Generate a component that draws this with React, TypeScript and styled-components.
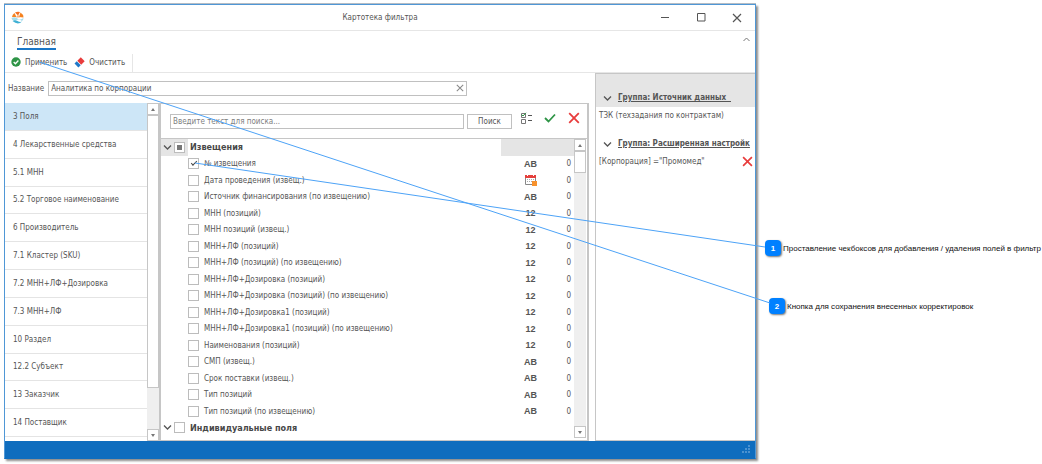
import React, { useEffect, useRef } from 'react';
import styled, { createGlobalStyle, css } from 'styled-components';

const GlobalStyle = createGlobalStyle`
  *, *::before, *::after { box-sizing: border-box; }
  body { margin: 0; background: #fff; }
  body, button, input, table {
    font-family: "DejaVu Sans Condensed", "DejaVu Sans", sans-serif;
    font-size: 8px;
    color: #555;
  }
  button { padding: 0; border: 0; background: none; }
  svg { flex: none; }
`;

const Page = styled.div`
  position: relative;
  display: flex;
  min-height: 100vh;
  padding: 4px 0 5px 4px;
`;

const Window = styled.main`
  flex: 1;
  min-width: 0;
  display: flex;
  flex-direction: column;
  border: 1px solid #4f97d6;
  border-bottom-color: #0f6dbe;
  background: #fff;
  box-shadow: 0 -1px 0 #b4bcc4, 2px 2px 2px #8c8c8c;
`;

const TitleBar = styled.header`
  display: grid;
  grid-template-columns: 108px 1fr 108px;
  align-items: center;
  height: 26px;
  border-bottom: 1px solid #e6e6e6;
`;

const LogoBox = styled.span`
  display: flex;
  padding-left: 6px;
`;

const Title = styled.h1`
  margin: 0;
  text-align: center;
  font-size: 8px;
  font-weight: 400;
`;

const WindowControls = styled.div`
  display: grid;
  grid-template-columns: repeat(3, 1fr);
  height: 100%;
`;

const IconButton = styled.button`
  display: flex;
  align-items: center;
  justify-content: center;
`;

const Ribbon = styled.section`
  height: 42px;
  border-bottom: 1px solid #e6e6e6;
`;

const TabRow = styled.div`
  display: flex;
  align-items: flex-start;
  justify-content: space-between;
  height: 23px;
  padding: 4px 4px 0 12px;
`;

const RibbonTab = styled.button`
  height: 15px;
  border-bottom: 2px solid #1a76c6;
  font-size: 10px;
  line-height: 12px;
`;

const ToolRow = styled.div`
  display: inline-flex;
  align-items: center;
  gap: 7px;
  height: 18px;
  padding: 0 7px 2px 6px;
  border-right: 1px solid #e6e6e6;
`;

const ToolButton = styled.button`
  display: flex;
  align-items: center;
  gap: 4px;
`;

const Workspace = styled.div`
  flex: 1;
  display: grid;
  grid-template-columns: minmax(0, 1fr) 160px;
  column-gap: 6px;
`;

const Editor = styled.div`
  display: flex;
  flex-direction: column;
`;

const NameRow = styled.div`
  display: flex;
  align-items: center;
  gap: 4px;
  height: 30px;
  padding: 0 122px 0 3px;
`;

const InputFrame = styled.div`
  flex: 1;
  display: flex;
  align-items: center;
  height: 15px;
  padding-right: 2px;
  border: 1px solid #c0c0c0;
`;

const TextInput = styled.input`
  flex: 1;
  min-width: 0;
  height: 100%;
  padding: 0 2px;
  border: 0;
  outline: 0;
  background: transparent;
  &::placeholder { color: #808080; opacity: 1; }
`;

const Columns = styled.div`
  flex: 1;
  display: grid;
  grid-template-columns: 154px minmax(0, 1fr);
`;

const Sidebar = styled.nav`
  display: grid;
  grid-template-columns: 1fr 12px;
`;

const SectionList = styled.ul`
  display: grid;
  grid-auto-rows: 1fr;
  margin: 0;
  padding: 0 0 4px;
  list-style: none;
`;

const SectionItem = styled.li<{ $selected?: boolean }>`
  display: flex;
  min-height: 24px;
  border-bottom: 1px solid #e4e4e4;
  background: ${p => (p.$selected ? '#cde6f7' : '#fff')};
`;

const SectionLink = styled.a`
  flex: 1;
  display: flex;
  align-items: center;
  padding-left: 8px;
  color: inherit;
  text-decoration: none;
`;

const Scrollbar = styled.div`
  display: flex;
  flex-direction: column;
  background: #efefef;
`;

const ScrollArrow = styled.button<{ $down?: boolean }>`
  display: flex;
  align-items: center;
  justify-content: center;
  height: 12px;
  border: 1px solid #c6c6c6;
  background: #fff;
  &::before {
    content: "";
    border: 2px solid transparent;
    ${p => (p.$down
      ? css`border-top: 3px solid #777; border-bottom: 0;`
      : css`border-bottom: 3px solid #777; border-top: 0;`)}
  }
`;

const ScrollTrack = styled.div<{ $thumb: number }>`
  flex: 1;
  display: grid;
  grid-template-rows: ${p => p.$thumb}fr ${p => 100 - p.$thumb}fr;
  &::before {
    content: "";
    border: 1px solid #c6c6c6;
    background: #fff;
  }
`;

const FieldsPanel = styled.section`
  display: flex;
  flex-direction: column;
  border: 1px solid #c6c6c6;
  border-width: 1px 2px;
`;

const SearchRow = styled.div`
  display: flex;
  align-items: center;
  gap: 3px;
  height: 35px;
  padding: 0 7px 0 9px;
  border-bottom: 1px solid #c6c6c6;
`;

const SearchButton = styled.button`
  width: 45px;
  height: 15px;
  border: 1px solid #c0c0c0;
`;

const SearchTools = styled.div`
  display: flex;
  align-items: center;
  gap: 12px;
  padding: 0 0 6px 5px;
`;

const TreeArea = styled.div`
  flex: 1;
  display: grid;
  grid-template-columns: minmax(0, 1fr) 12px;
  padding: 0 1px 2px 0;
`;

const FieldTable = styled.table`
  display: block;
  padding-bottom: 2px;
`;

const FieldBody = styled.tbody`
  display: grid;
  grid-auto-rows: minmax(14px, 1fr);
  height: 100%;
`;

const FieldRow = styled.tr`
  display: grid;
  grid-template-columns: 27px minmax(0, 1fr) 59px 14px;
`;

const Cell = styled.td<{ $shaded?: boolean }>`
  display: flex;
  align-items: center;
  gap: 2px;
  padding: 0;
  background: ${p => (p.$shaded ? '#e5e5e5' : 'transparent')};
`;

const ToggleCell = styled(Cell)`
  padding-left: 2px;
`;

const TypeCell = styled(Cell)`
  justify-content: center;
  font: bold 9px "Liberation Sans", sans-serif;
`;

const CountCell = styled(Cell)`
  justify-content: flex-end;
  padding-right: 3px;
`;

const FieldLabel = styled.label`
  display: flex;
  align-items: center;
  gap: 5px;
  white-space: nowrap;
`;

const GroupLabel = styled.label`
  padding-left: 2px;
  font-size: 9px;
  font-weight: 700;
  color: #484848;
  white-space: nowrap;
`;

const Check = styled.input`
  appearance: none;
  display: flex;
  align-items: center;
  justify-content: center;
  flex: none;
  width: 11px;
  height: 11px;
  margin: 0;
  border: 1px solid #bcbcbc;
  background: #fff;
  &:checked::before {
    content: "";
    width: 6px;
    height: 3px;
    border: solid #444;
    border-width: 0 0 1px 1px;
    transform: translateY(-1px) rotate(-45deg);
  }
  &:indeterminate::before {
    content: "";
    width: 5px;
    height: 5px;
    background: #777;
  }
`;

const FilterPanel = styled.aside`
  min-width: 0;
  border: 1px solid #c6c6c6;
  border-right: 0;
`;

const FilterHeading = styled.h2<{ $active?: boolean }>`
  display: flex;
  align-items: flex-end;
  height: ${p => (p.$active ? 33 : 30)}px;
  margin: 0;
  padding: 0 2px 3px 7px;
  background: ${p => (p.$active ? '#e5e5e5' : 'transparent')};
  font-size: 8px;
  line-height: 12px;
`;

const HeadingToggle = styled(IconButton)`
  width: 15px;
  height: 12px;
  justify-content: flex-start;
`;

const HeadingText = styled.span`
  min-width: 0;
  overflow: hidden;
  white-space: pre;
  text-decoration: underline;
`;

const FilterLine = styled.div`
  display: flex;
  align-items: center;
  justify-content: space-between;
  height: 16px;
  padding: 0 2px 0 3px;
  white-space: nowrap;
`;

const StatusBar = styled.footer`
  display: flex;
  align-items: flex-end;
  justify-content: flex-end;
  height: 17px;
  padding: 4px;
  background: #0f6dbe;
`;

const Notes = styled.aside`
  flex: none;
  display: flex;
  flex-direction: column;
  gap: 42px;
  width: 286px;
  padding: 236px 0 0 9px;
`;

const Note = styled.div<{ $indent?: boolean }>`
  display: flex;
  align-items: center;
  gap: 2px;
  padding-left: ${p => (p.$indent ? 4 : 0)}px;
  font: 8px "Liberation Sans", sans-serif;
  color: #111;
  white-space: nowrap;
`;

const Badge = styled.span`
  display: flex;
  align-items: center;
  justify-content: center;
  flex: none;
  width: 16px;
  height: 16px;
  border-radius: 4px;
  background: #0080ff;
  box-shadow: 1px 1px 2px #777;
  font-weight: 700;
  color: #fff;
`;

const Leaders = styled.svg`
  position: absolute;
  inset: 0;
  width: 100%;
  height: 100%;
  pointer-events: none;
`;

const Logo = () => (
  <svg width="13" height="13" viewBox="0 0 26 26">
    <path d="M2 12A11 11 0 0 1 7 4L11 12Z" fill="#f58220" />
    <path d="M8 3A12 12 0 0 1 18 2L14 9Z" fill="#f36f21" />
    <path d="M19 3A12 12 0 0 1 25 13L16 12Z" fill="#f58220" />
    <path d="M10 13L14 7L18 13Z" fill="#f9b27c" />
    <path d="M1 14Q7 11 13 15T25 14Q25 18 22 20Q17 15 11 18T2 17Z" fill="#a6dcec" />
    <path d="M3 20Q8 17 13 20T22 21Q14 29 3 20Z" fill="#3fb0d4" />
  </svg>
);

const Chevron = ({ up }: { up?: boolean }) => (
  <svg width="9" height="9" viewBox="0 0 9 9" fill="none" stroke={up ? '#777' : '#555'} strokeWidth={up ? 1 : 1.3}>
    <path d={up ? 'M1.500 6l3-3 3 3' : 'M1 2.500l3.500 3.500 3.500-3.500'} />
  </svg>
);

const Cross = ({ size, color, width = 1 }: { size: number; color: string; width?: number }) => (
  <svg width={size} height={size} viewBox="0 0 10 10" stroke={color} strokeWidth={width}>
    <path d="M1 1L9 9M9 1L1 9" />
  </svg>
);

const ApplyIcon = () => (
  <svg width="10" height="10" viewBox="0 0 10 10">
    <circle cx="5" cy="5" r="4.700" fill="#2e9446" />
    <path d="M2.700 5l1.700 1.700 3-3.200" fill="none" stroke="#fff" strokeWidth="1.300" />
  </svg>
);

const EraserIcon = () => (
  <svg width="11" height="11" viewBox="0 0 11 11">
    <path d="M6.800 .3L10.700 4.200L7.200 7.700L3.300 3.800Z" fill="#e83c3c" />
    <path d="M2.800 4.300L6.700 8.200L4.400 10.500L.5 6.600Z" fill="#1f78c8" />
  </svg>
);

const CheckListIcon = () => (
  <svg width="12" height="12" viewBox="0 0 12 12" fill="none" stroke="#777">
    <path d="M1.500 1.500h4v4h-4zM1.500 7.500h4v4h-4z" />
    <path d="M8 3.500h4M8 8.500h4" stroke="#555" />
    <path d="M1.500 2.500l1.500 1.500L6 .8" stroke="#2e9446" />
  </svg>
);

const CalendarIcon = () => (
  <svg width="12" height="12" viewBox="0 0 12 12">
    <path d="M.5 3V10.500H10.500V3" fill="#fff" stroke="#888" />
    <path d="M0 1H11V4H0Z" fill="#e5403c" />
    <path d="M2.500 0V2M8.500 0V2" stroke="#fff" />
    <path d="M2 5.500H9M2 7.500H7" stroke="#aaa" strokeDasharray="1 1" />
    <path d="M7 7H12V12H7Z" fill="#f7922d" />
  </svg>
);

const GripIcon = () => (
  <svg width="9" height="9" viewBox="0 0 9 9" fill="#4c92d0">
    <path d="M6 0h2v2H6zM6 3h2v2H6zM6 6h2v2H6zM3 3h2v2H3zM3 6h2v2H3zM0 6h2v2H0z" />
  </svg>
);

const sections = [
  '3 Поля', '4 Лекарственные средства', '5.1 МНН', '5.2 Торговое наименование',
  '6 Производитель', '7.1 Кластер (SKU)', '7.2 МНН+ЛФ+Дозировка', '7.3 МНН+ЛФ',
  '10 Раздел', '12.2 Субъект', '13 Заказчик', '14 Поставщик',
];

type FieldType = 'AB' | '12' | 'date';

const fields: [string, FieldType][] = [
  ['№ извещения', 'AB'],
  ['Дата проведения (извещ.)', 'date'],
  ['Источник финансирования (по извещению)', 'AB'],
  ['МНН (позиций)', '12'],
  ['МНН позиций (извещ.)', '12'],
  ['МНН+ЛФ (позиций)', '12'],
  ['МНН+ЛФ (позиций) (по извещению)', '12'],
  ['МНН+ЛФ+Дозировка (позиций)', '12'],
  ['МНН+ЛФ+Дозировка (позиций) (по извещению)', '12'],
  ['МНН+ЛФ+Дозировка1 (позиций)', '12'],
  ['МНН+ЛФ+Дозировка1 (позиций) (по извещению)', '12'],
  ['Наименования (позиций)', '12'],
  ['СМП (извещ.)', 'AB'],
  ['Срок поставки (извещ.)', 'AB'],
  ['Тип позиций', 'AB'],
  ['Тип позиций (по извещению)', 'AB'],
];

function GroupRow({ id, name, mixed }: { id: string; name: string; mixed?: boolean }) {
  const box = useRef<HTMLInputElement>(null);
  useEffect(() => {
    if (box.current) box.current.indeterminate = !!mixed;
  }, [mixed]);
  return (
    <FieldRow>
      <ToggleCell $shaded={mixed}>
        <IconButton aria-label={`Свернуть: ${name}`}><Chevron /></IconButton>
        <Check ref={box} id={id} type="checkbox" />
      </ToggleCell>
      <Cell><GroupLabel htmlFor={id}>{name}</GroupLabel></Cell>
      <TypeCell $shaded={mixed} />
      <CountCell $shaded={mixed} />
    </FieldRow>
  );
}

function ScrollControl({ thumb }: { thumb: number }) {
  return (
    <Scrollbar>
      <ScrollArrow aria-label="Вверх" />
      <ScrollTrack $thumb={thumb} />
      <ScrollArrow $down aria-label="Вниз" />
    </Scrollbar>
  );
}

function FilterGroup({ title, active }: { title: string; active?: boolean }) {
  return (
    <FilterHeading $active={active}>
      <HeadingToggle aria-label="Свернуть группу"><Chevron /></HeadingToggle>
      <HeadingText>{title}</HeadingText>
    </FilterHeading>
  );
}

export default function App() {
  return (
    <>
      <GlobalStyle />
      <Page>
        <Window>
          <TitleBar>
            <LogoBox><Logo /></LogoBox>
            <Title>Картотека фильтра</Title>
            <WindowControls>
              <IconButton aria-label="Свернуть">
                <svg width="9" height="9" stroke="#555"><path d="M0 4.500h8" /></svg>
              </IconButton>
              <IconButton aria-label="Развернуть">
                <svg width="9" height="9" stroke="#555" fill="none"><path d="M.5 .5h7.500v7.500h-7.500z" /></svg>
              </IconButton>
              <IconButton aria-label="Закрыть"><Cross size={10} color="#555" width={1.2} /></IconButton>
            </WindowControls>
          </TitleBar>

          <Ribbon>
            <TabRow>
              <RibbonTab>Главная</RibbonTab>
              <IconButton aria-label="Свернуть ленту"><Chevron up /></IconButton>
            </TabRow>
            <ToolRow>
              <ToolButton><ApplyIcon />Применить</ToolButton>
              <ToolButton><EraserIcon />Очистить</ToolButton>
            </ToolRow>
          </Ribbon>

          <Workspace>
            <Editor>
              <NameRow>
                <label htmlFor="name">Название</label>
                <InputFrame>
                  <TextInput id="name" defaultValue="Аналитика по корпорации" />
                  <IconButton aria-label="Стереть название"><Cross size={8} color="#888" width={1.3} /></IconButton>
                </InputFrame>
              </NameRow>
              <Columns>
                <Sidebar>
                  <SectionList>
                    {sections.map((s, i) => (
                      <SectionItem key={s} $selected={i === 0}>
                        <SectionLink href="#">{s}</SectionLink>
                      </SectionItem>
                    ))}
                  </SectionList>
                  <ScrollControl thumb={87} />
                </Sidebar>
                <FieldsPanel>
                  <SearchRow>
                    <InputFrame>
                      <TextInput aria-label="Поиск полей" placeholder="Введите текст для поиска..." />
                    </InputFrame>
                    <SearchButton>Поиск</SearchButton>
                    <SearchTools>
                      <IconButton aria-label="Отмеченные"><CheckListIcon /></IconButton>
                      <IconButton aria-label="Выбрать все">
                        <svg width="12" height="12" viewBox="0 0 12 12" fill="none" stroke="#2e9446" strokeWidth="1.800">
                          <path d="M1 6l3.500 3.500L11 2.500" />
                        </svg>
                      </IconButton>
                      <IconButton aria-label="Снять все"><Cross size={12} color="#e83c3c" width={1.5} /></IconButton>
                    </SearchTools>
                  </SearchRow>
                  <TreeArea>
                    <FieldTable>
                      <FieldBody>
                        <GroupRow id="group-notices" name="Извещения" mixed />
                        {fields.map(([name, type], i) => (
                          <FieldRow key={name}>
                            <Cell />
                            <Cell>
                              <FieldLabel>
                                <Check type="checkbox" defaultChecked={i === 0} />
                                {name}
                              </FieldLabel>
                            </Cell>
                            <TypeCell>{type === 'date' ? <CalendarIcon /> : type}</TypeCell>
                            <CountCell>0</CountCell>
                          </FieldRow>
                        ))}
                        <GroupRow id="group-custom" name="Индивидуальные поля" />
                      </FieldBody>
                    </FieldTable>
                    <ScrollControl thumb={8} />
                  </TreeArea>
                </FieldsPanel>
              </Columns>
            </Editor>

            <FilterPanel>
              <FilterGroup active title={'Группа: Источник данных  '} />
              <FilterLine>ТЗК (техзадания по контрактам)</FilterLine>
              <FilterGroup title="Группа: Расширенная настройк" />
              <FilterLine>
                [Корпорация] ="Промомед"
                <IconButton aria-label="Удалить условие"><Cross size={11} color="#e83c3c" width={1.5} /></IconButton>
              </FilterLine>
            </FilterPanel>
          </Workspace>

          <StatusBar><GripIcon /></StatusBar>
        </Window>

        <Notes>
          <Note><Badge>1</Badge>Проставление чекбоксов для добавления / удаления полей в фильтр</Note>
          <Note $indent><Badge>2</Badge>Кнопка для сохранения внесенных корректировок</Note>
        </Notes>

        <Leaders viewBox="0 0 1042 464" preserveAspectRatio="none" stroke="#4da3f7" aria-hidden="true">
          <path d="M195 163L765 247M39 62L770 303" vectorEffect="non-scaling-stroke" />
        </Leaders>
      </Page>
    </>
  );
}
